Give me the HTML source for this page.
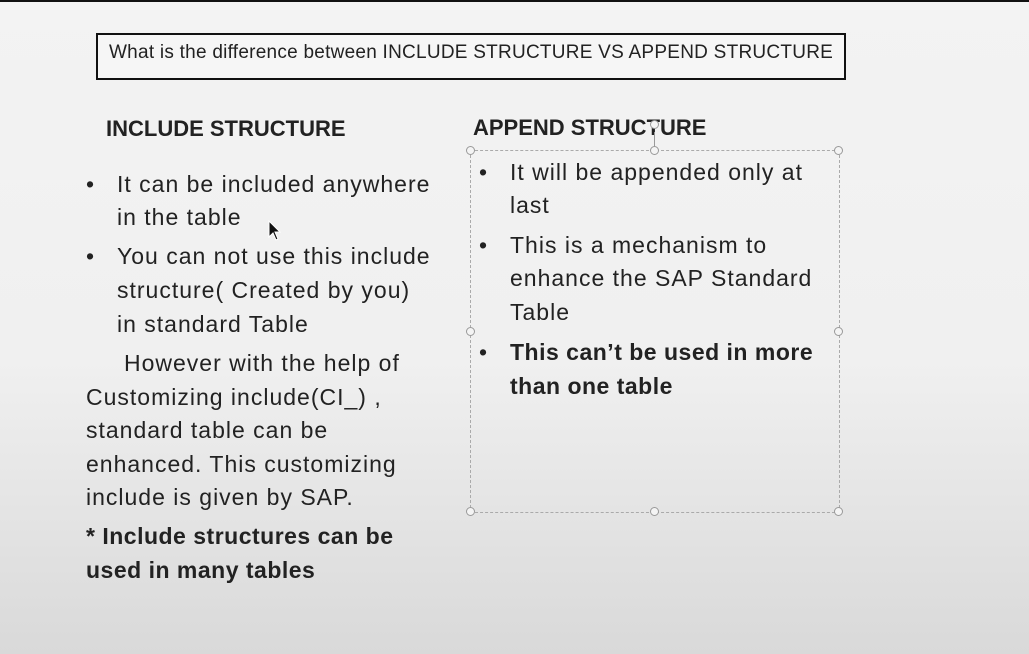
<!DOCTYPE html>
<html><head><meta charset="utf-8"><style>
body{margin:0;width:1029px;height:654px;overflow:hidden;background:linear-gradient(#f3f3f3 0%,#f0f0f0 55%,#d9d9d9 100%);font-family:"Liberation Sans",sans-serif;color:#222;position:relative}
.t{position:absolute;white-space:nowrap;font-size:23px;line-height:1;letter-spacing:1px}
.b{font-weight:bold;letter-spacing:0.5px}
.h{position:absolute;width:7px;height:7px;border:1px solid #999;border-radius:50%;background:#f4f4f4}
</style></head><body>
<div style="position:absolute;left:0;top:0;width:1029px;height:2px;background:#111"></div>
<div style="position:absolute;left:96px;top:33px;width:746px;height:43px;border:2px solid #111;background:#f6f6f6"></div>
<div class="t" style="left:109px;top:43px;font-size:19px;letter-spacing:0.25px">What is the difference between INCLUDE STRUCTURE VS APPEND STRUCTURE</div>
<div class="t b" style="left:106px;top:118px;font-size:22px;letter-spacing:0">INCLUDE STRUCTURE</div>
<div class="t b" style="left:473px;top:117px;font-size:22px;letter-spacing:0">APPEND STRUCTURE</div>

<div class="t" style="left:86px;top:173px">•</div>
<div class="t" style="left:117px;top:173px">It can be included anywhere</div>
<div class="t" style="left:117px;top:206px">in the table</div>
<div class="t" style="left:86px;top:245px">•</div>
<div class="t" style="left:117px;top:245px">You can not use this include</div>
<div class="t" style="left:117px;top:279px">structure( Created by you)</div>
<div class="t" style="left:117px;top:313px">in standard Table</div>
<div class="t" style="left:124px;top:352px">However with the help of</div>
<div class="t" style="left:86px;top:386px">Customizing include(CI_) ,</div>
<div class="t" style="left:86px;top:419px">standard table can be</div>
<div class="t" style="left:86px;top:453px">enhanced. This customizing</div>
<div class="t" style="left:86px;top:486px">include is given by SAP.</div>
<div class="t b" style="left:86px;top:525px">* Include structures can be</div>
<div class="t b" style="left:86px;top:559px">used in many tables</div>

<div style="position:absolute;left:470px;top:150px;width:368px;height:361px;border:1px dashed #aaa"></div>
<div style="position:absolute;left:654px;top:132px;width:1px;height:18px;background:#999"></div>
<div class="h" style="left:650px;top:120px"></div>
<div class="h" style="left:466px;top:146px"></div><div class="h" style="left:650px;top:146px"></div><div class="h" style="left:834px;top:146px"></div>
<div class="h" style="left:466px;top:327px"></div><div class="h" style="left:834px;top:327px"></div>
<div class="h" style="left:466px;top:507px"></div><div class="h" style="left:650px;top:507px"></div><div class="h" style="left:834px;top:507px"></div>

<div class="t" style="left:479px;top:161px">•</div>
<div class="t" style="left:510px;top:161px">It will be appended only at</div>
<div class="t" style="left:510px;top:194px">last</div>
<div class="t" style="left:479px;top:234px">•</div>
<div class="t" style="left:510px;top:234px">This is a mechanism to</div>
<div class="t" style="left:510px;top:267px">enhance the SAP Standard</div>
<div class="t" style="left:510px;top:301px">Table</div>
<div class="t" style="left:479px;top:341px">•</div>
<div class="t b" style="left:510px;top:341px">This can’t be used in more</div>
<div class="t b" style="left:510px;top:375px">than one table</div>

<svg style="position:absolute;left:268px;top:220px" width="14" height="22" viewBox="0 0 14 22"><path d="M1 1 L1 17 L5 13 L8 20 L10 19 L7 12 L12 12 Z" fill="#111" stroke="#fff" stroke-width="1"/></svg>
</body></html>
